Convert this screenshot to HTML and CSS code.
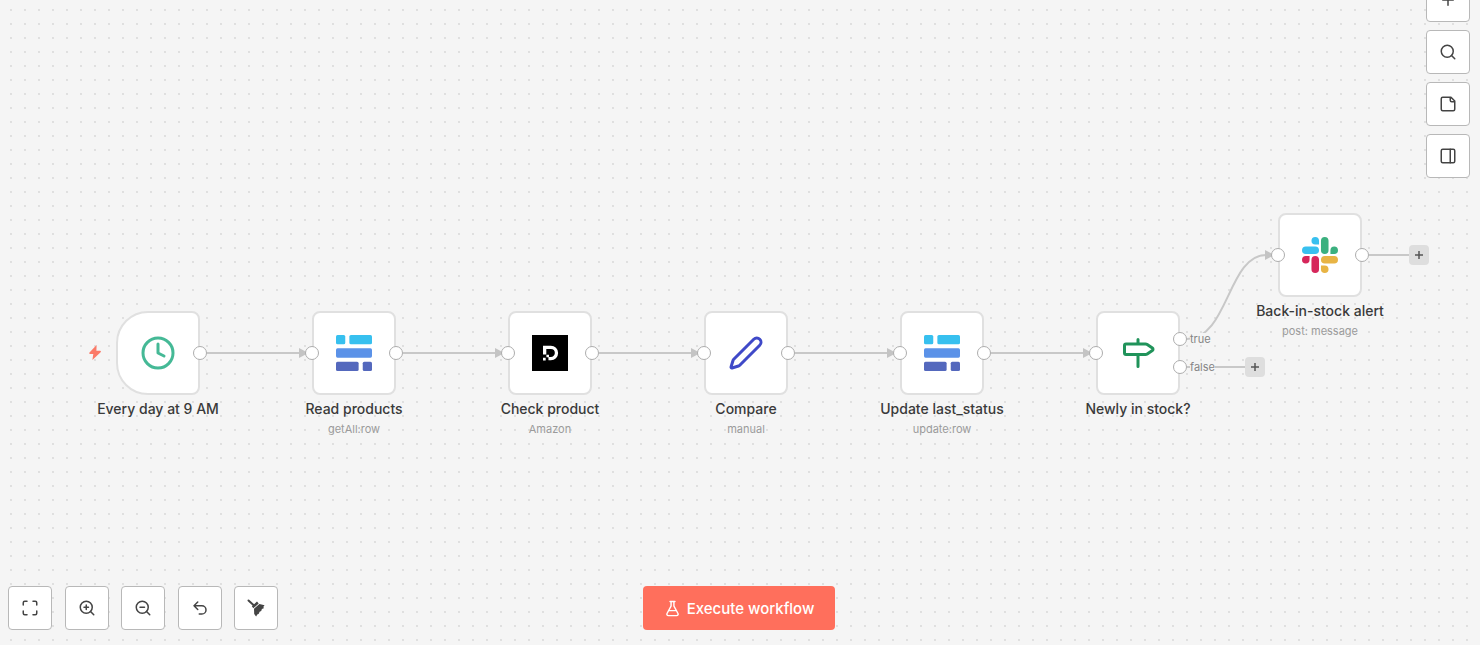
FILE: index.html
```html
<!DOCTYPE html>
<html lang="en">
  <head>
    <meta charset="UTF-8" />
    <meta name="viewport" content="width=device-width, initial-scale=1.0" />
    <title>Workflow Editor</title>
    <link rel="stylesheet" href="styles.css">
  </head>
  <body>
    <svg class="sprite" aria-hidden="true">
      <symbol id="icon-rows" viewBox="0 0 35 35">
        <g fill="#37c0ef">
          <rect width="9" height="9" rx="1.5" />
          <rect x="13" width="22" height="9" rx="1.5" />
        </g>
        <rect y="13" width="35" height="9" rx="1.5" fill="#5b92e8" />
        <g fill="#5468bd">
          <rect y="26" width="22" height="9" rx="1.5" />
          <rect x="26" y="26" width="9" height="9" rx="1.5" />
        </g>
      </symbol>
      <marker id="arrow" viewBox="0 0 8 10" refX="1" refY="5" markerWidth="8" markerHeight="10" markerUnits="userSpaceOnUse">
        <path d="M0 0L8 4.2V5.8L0 10z" fill="#c4c4c4" />
      </marker>
    </svg>

    <main class="canvas">
      <svg class="edges" aria-hidden="true">
        <g marker-end="url(#arrow)">
          <path d="M207 353H300" />
          <path d="M403 353H496" />
          <path d="M599 353H692" />
          <path d="M795 353H888" />
          <path d="M991 353H1084" />
          <path d="M1187 339C1228 339 1228 255 1266 255" />
        </g>
        <path d="M1187 367H1246" />
        <path d="M1369 255H1410" />
      </svg>

      <svg class="bolt" viewBox="0 0 12 15" aria-hidden="true">
        <path d="M7.6 0L.5 7.6c-.5.6-.2 1.400.5 1.400h3.300L3.400 15l8.200-7.700c.6-.6.3-1.500-.5-1.500H7.400z" />
      </svg>

      <article class="node node-schedule">
        <div class="box trigger">
          <svg class="line-icon green" viewBox="0 0 24 24"><circle cx="12" cy="12" r="10" /><path d="M12 6v6l4 2" /></svg>
          <span class="port out"></span>
        </div>
        <h2>Every day at 9 AM</h2>
      </article>

      <article class="node node-read">
        <div class="box">
          <span class="port in"></span>
          <svg><use href="#icon-rows" /></svg>
          <span class="port out"></span>
        </div>
        <h2>Read products</h2>
        <p>getAll:row</p>
      </article>

      <article class="node node-check">
        <div class="box">
          <span class="port in"></span>
          <svg viewBox="0 0 35 35">
            <rect width="35" height="35" />
            <path d="M12.300 19v-7h6a5.500 5.500 0 0 1 0 11h-2.300" fill="none" stroke="#fff" stroke-width="3.200" />
            <path d="M10.700 22.200h2.600v2.600h-2.600zM14 19.100h2.500v2.500H14z" fill="#fff" />
          </svg>
          <span class="port out"></span>
        </div>
        <h2>Check product</h2>
        <p>Amazon</p>
      </article>

      <article class="node node-compare">
        <div class="box">
          <span class="port in"></span>
          <svg class="line-icon blue" viewBox="0 0 24 24"><path d="M21.174 6.812a1 1 0 0 0-3.986-3.987L3.842 16.174a2 2 0 0 0-.5.83l-1.321 4.352a.5.5 0 0 0 .623.622l4.353-1.32a2 2 0 0 0 .83-.497z" /></svg>
          <span class="port out"></span>
        </div>
        <h2>Compare</h2>
        <p>manual</p>
      </article>

      <article class="node node-update">
        <div class="box">
          <span class="port in"></span>
          <svg><use href="#icon-rows" /></svg>
          <span class="port out"></span>
        </div>
        <h2>Update last_status</h2>
        <p>update:row</p>
      </article>

      <article class="node node-if">
        <div class="box">
          <span class="port in"></span>
          <svg class="line-icon dark-green" viewBox="0 0 24 24"><path d="M12 13v8M12 3v3M4 6a1 1 0 0 0-1 1v5a1 1 0 0 0 1 1h13a2 2 0 0 0 1.152-.365l3.424-2.317a1 1 0 0 0 0-1.635l-3.424-2.318A2 2 0 0 0 17 6z" /></svg>
          <span class="port out port-true"></span>
          <span class="port out port-false"></span>
          <span class="port-label label-true">true</span>
          <span class="port-label label-false">false</span>
        </div>
        <h2>Newly in stock?</h2>
      </article>

      <article class="node node-alert">
        <div class="box">
          <span class="port in"></span>
          <svg viewBox="0 0 24 24">
            <path fill="#d6265b" d="M5.042 15.165a2.528 2.528 0 0 1-2.52 2.523A2.528 2.528 0 0 1 0 15.165a2.527 2.527 0 0 1 2.522-2.52h2.52v2.52zM6.313 15.165a2.527 2.527 0 0 1 2.521-2.52 2.527 2.527 0 0 1 2.521 2.52v6.313A2.528 2.528 0 0 1 8.834 24a2.528 2.528 0 0 1-2.521-2.522v-6.313z" />
            <path fill="#38c0ef" d="M8.834 5.042a2.528 2.528 0 0 1-2.521-2.52A2.528 2.528 0 0 1 8.834 0a2.528 2.528 0 0 1 2.521 2.522v2.52H8.834zM8.834 6.313a2.528 2.528 0 0 1 2.521 2.521 2.528 2.528 0 0 1-2.521 2.521H2.522A2.528 2.528 0 0 1 0 8.834a2.528 2.528 0 0 1 2.522-2.521h6.312z" />
            <path fill="#3bb07f" d="M18.956 8.834a2.528 2.528 0 0 1 2.522-2.521A2.528 2.528 0 0 1 24 8.834a2.528 2.528 0 0 1-2.522 2.521h-2.522V8.834zM17.688 8.834a2.528 2.528 0 0 1-2.523 2.521 2.527 2.527 0 0 1-2.52-2.521V2.522A2.527 2.527 0 0 1 15.165 0a2.528 2.528 0 0 1 2.523 2.522v6.312z" />
            <path fill="#e8b444" d="M15.165 18.956a2.528 2.528 0 0 1 2.523 2.522A2.528 2.528 0 0 1 15.165 24a2.527 2.527 0 0 1-2.52-2.522v-2.522h2.52zM15.165 17.688a2.527 2.527 0 0 1-2.52-2.523 2.526 2.526 0 0 1 2.52-2.52h6.313A2.527 2.527 0 0 1 24 15.165a2.528 2.528 0 0 1-2.522 2.523h-6.313z" />
          </svg>
          <span class="port out"></span>
        </div>
        <h2>Back-in-stock alert</h2>
        <p>post: message</p>
      </article>

      <button class="add add-false" aria-label="Add node after false">
        <svg viewBox="0 0 8 8"><path d="M4 0v8M0 4h8" /></svg>
      </button>
      <button class="add add-alert" aria-label="Add node after alert">
        <svg viewBox="0 0 8 8"><path d="M4 0v8M0 4h8" /></svg>
      </button>

      <div class="side-tools">
        <button class="tool" aria-label="Add node">
          <svg viewBox="0 0 24 24"><path d="M5 12h14M12 5v14" /></svg>
        </button>
        <button class="tool" aria-label="Search">
          <svg viewBox="0 0 24 24"><circle cx="11" cy="11" r="8" /><path d="m21 21-4.3-4.3" /></svg>
        </button>
        <button class="tool" aria-label="Add note">
          <svg viewBox="0 0 24 24"><path d="M16 3H5a2 2 0 0 0-2 2v14a2 2 0 0 0 2 2h14a2 2 0 0 0 2-2V8zM15 3v4a2 2 0 0 0 2 2h4" /></svg>
        </button>
        <button class="tool" aria-label="Toggle panel">
          <svg viewBox="0 0 24 24"><rect x="3" y="3" width="18" height="18" rx="2" /><path d="M15 3v18" /></svg>
        </button>
      </div>

      <footer class="bottom-bar">
        <div class="view-tools">
          <button class="tool" aria-label="Fit view">
            <svg viewBox="0 0 24 24"><path d="M8 3H5a2 2 0 0 0-2 2v3M21 8V5a2 2 0 0 0-2-2h-3M3 16v3a2 2 0 0 0 2 2h3M16 21h3a2 2 0 0 0 2-2v-3" /></svg>
          </button>
          <button class="tool" aria-label="Zoom in">
            <svg viewBox="0 0 24 24"><circle cx="11" cy="11" r="8" /><path d="m21 21-4.3-4.3M11 8v6M8 11h6" /></svg>
          </button>
          <button class="tool" aria-label="Zoom out">
            <svg viewBox="0 0 24 24"><circle cx="11" cy="11" r="8" /><path d="m21 21-4.3-4.3M8 11h6" /></svg>
          </button>
          <button class="tool" aria-label="Undo">
            <svg viewBox="0 0 24 24"><path d="M9 14 4 9l5-5M4 9h10.5a5.5 5.5 0 0 1 0 11H11" /></svg>
          </button>
          <button class="tool" aria-label="Tidy up">
            <svg class="broom" viewBox="0 0 18 18">
              <path class="stick" d="M1.500 1.500l5.500 5" />
              <path d="M4.800 7.300L10 2.600l1.700 1.800-5.300 4.800z" />
              <path d="M7 9.800l5.400-4.900 5.200 1.400-1.200 1.500.4 1.400-1.900.9-.7 1.800-1.600.9-.8 1.900-1.500.7-1.200 2-1.900-2.400z" />
            </svg>
          </button>
        </div>
        <button class="execute">
          <svg viewBox="0 0 24 24"><path d="M14 2v6a2 2 0 0 0 .245.96l5.51 10.08A2 2 0 0 1 18 22H6a2 2 0 0 1-1.755-2.96l5.51-10.08A2 2 0 0 0 10 8V2M6.453 15h11.094M8.500 2h7" /></svg>
          Execute workflow
        </button>
      </footer>
    </main>
  </body>
</html>
```
FILE: styles.css
```css
* {
  box-sizing: border-box;
}
body {
  margin: 0;
  font-family: Inter, "Liberation Sans", sans-serif;
  color: #3a3a3a;
}
.sprite {
  position: absolute;
  width: 0;
  height: 0;
}
.canvas {
  position: relative;
  min-height: 100vh;
  overflow: hidden;
  display: flex;
  flex-direction: column;
  justify-content: flex-end;
  background-color: #f5f5f5;
  background-image: radial-gradient(circle, #d0d0d0 0, #d0d0d0 0.5px, transparent 1px);
  background-size: 14px 14px;
  background-position: 4px 3px;
}
.edges {
  position: absolute;
  top: 0;
  left: 0;
  width: 100%;
  height: 100%;
  fill: none;
  stroke: #c8c8c8;
  stroke-width: 2;
}
.bolt {
  position: absolute;
  left: 89px;
  top: 345px;
  width: 12px;
  height: 15px;
  fill: #fb7a68;
}

/* nodes */
.node {
  position: absolute;
  top: 311px;
  width: 140px;
  display: flex;
  flex-direction: column;
  align-items: center;
  text-align: center;
}
.node-schedule {
  left: 88px;
}
.node-read {
  left: 284px;
}
.node-check {
  left: 480px;
}
.node-compare {
  left: 676px;
}
.node-update {
  left: 872px;
}
.node-if {
  left: 1068px;
}
.node-alert {
  left: 1250px;
  top: 213px;
}
.box {
  position: relative;
  width: 84px;
  height: 84px;
  display: flex;
  align-items: center;
  justify-content: center;
  background: white;
  border: 2px solid #e0e0e0;
  border-radius: 8px;
}
.box.trigger {
  border-radius: 32px 8px 8px 32px;
}
.box svg {
  width: 36px;
  height: 36px;
}
.node h2 {
  margin: 4px 0 0;
  font-size: 14px;
  font-weight: 500;
  line-height: 20px;
  white-space: nowrap;
}
.node p {
  margin: 0;
  font-size: 11px;
  line-height: 20px;
  color: #9b9b9b;
}
.line-icon {
  fill: none;
  stroke: currentColor;
  stroke-width: 2;
  stroke-linecap: round;
  stroke-linejoin: round;
}
.green {
  color: #45b996;
}
.blue {
  color: #3f49c8;
}
.dark-green {
  color: #20935a;
}
.port {
  position: absolute;
  top: 33px;
  width: 14px;
  height: 14px;
  background: white;
  border: 1px solid #adadad;
  border-radius: 50%;
}
.port.in {
  left: -9px;
}
.port.out {
  right: -9px;
}
.port-true {
  top: 19px;
}
.port-false {
  top: 47px;
}
.port-label {
  position: absolute;
  left: 92px;
  font-size: 11px;
  line-height: 12px;
  color: #858585;
  background: #f5f5f5;
}
.label-true {
  top: 20px;
}
.label-false {
  top: 48px;
}
.add {
  position: absolute;
  width: 20px;
  height: 20px;
  padding: 0;
  display: flex;
  align-items: center;
  justify-content: center;
  background: #dedede;
  border: none;
  border-radius: 4px;
  cursor: pointer;
}
.add svg {
  width: 8px;
  height: 8px;
  stroke: #555;
  stroke-width: 1.5;
}
.add-false {
  left: 1245px;
  top: 357px;
}
.add-alert {
  left: 1409px;
  top: 245px;
}

/* toolbars */
.tool {
  width: 44px;
  height: 44px;
  padding: 0;
  display: flex;
  align-items: center;
  justify-content: center;
  background: white;
  border: 1px solid #b8b8b8;
  border-radius: 4px;
  cursor: pointer;
}
.tool svg {
  width: 18px;
  height: 18px;
  fill: none;
  stroke: #444;
  stroke-width: 2;
  stroke-linecap: round;
  stroke-linejoin: round;
}
.tool .broom {
  fill: #444;
  stroke: none;
}
.broom .stick {
  stroke: #444;
  stroke-width: 2;
}
.side-tools {
  position: absolute;
  top: -22px;
  right: 10px;
  display: flex;
  flex-direction: column;
  gap: 8px;
}
.bottom-bar {
  display: grid;
  grid-template-columns: 1fr auto 1fr;
  align-items: center;
  padding: 0 10px 15px 8px;
}
.view-tools {
  width: 270px;
  display: flex;
  justify-content: space-between;
}
.execute {
  height: 44px;
  padding: 0 21px;
  display: flex;
  align-items: center;
  gap: 6px;
  font-family: inherit;
  font-size: 15px;
  font-weight: 500;
  color: white;
  background: #ff6f5c;
  border: none;
  border-radius: 4px;
  cursor: pointer;
}
.execute svg {
  width: 17px;
  height: 17px;
  fill: none;
  stroke: currentColor;
  stroke-width: 2;
  stroke-linecap: round;
  stroke-linejoin: round;
}
```
